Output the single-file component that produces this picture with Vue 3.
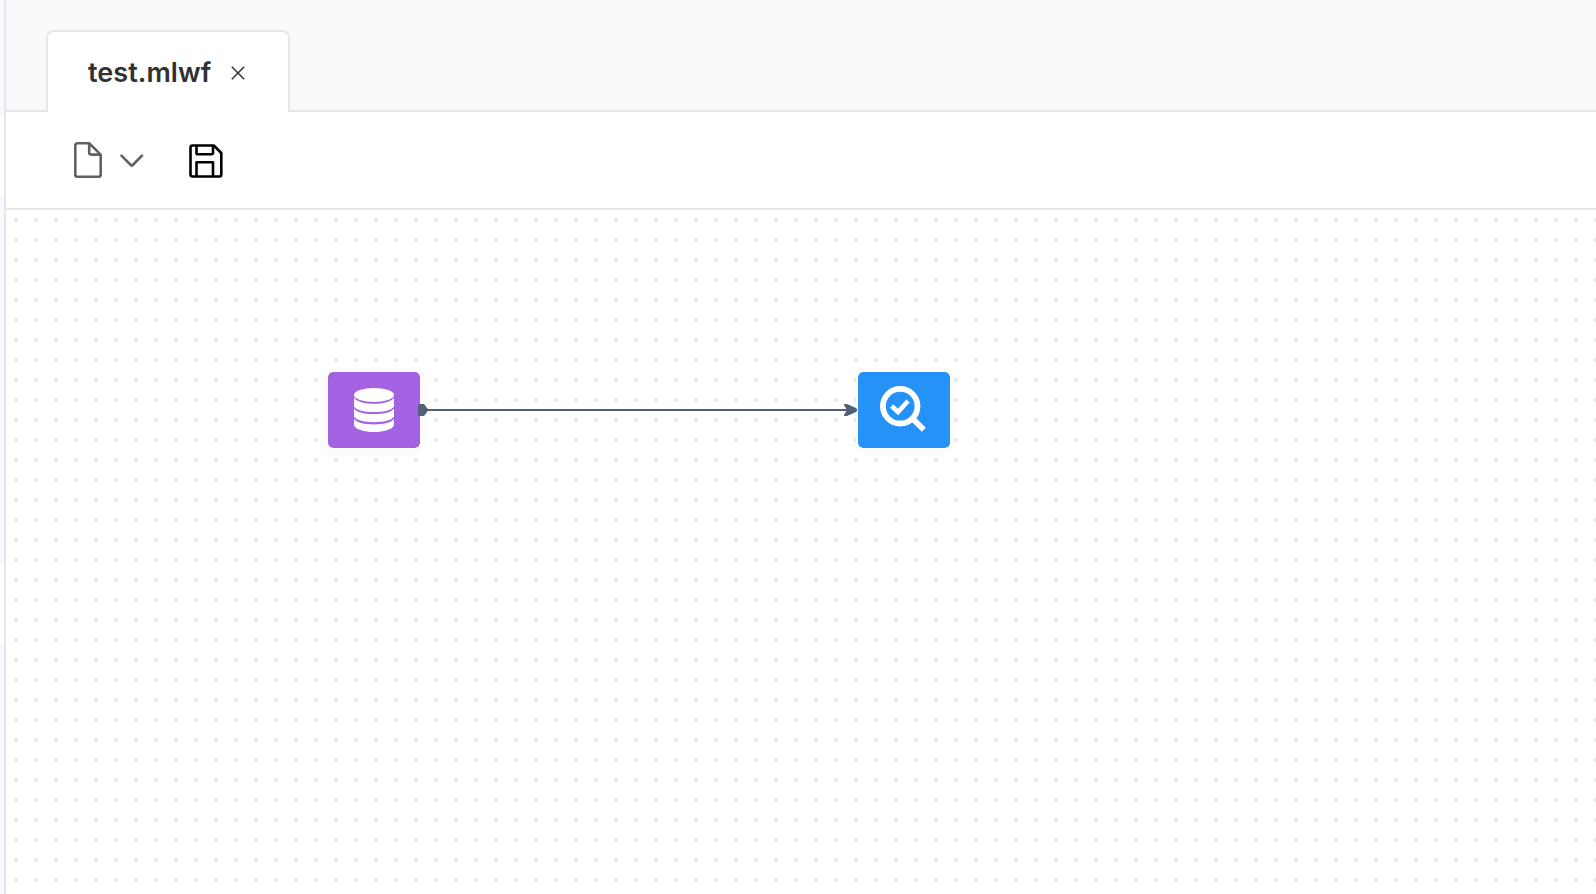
<script setup>
const rail = ['top', 'active', 'middle', 'hover', 'rest']
</script>

<template>
  <div class="app">
    <aside class="rail">
      <span v-for="part in rail" :key="part" :class="['rail-part', part]"></span>
    </aside>
    <main class="editor">
      <header class="tabs">
        <div class="tab">
          <span class="name">test.mlwf</span>
          <svg class="close" width="14" height="14" viewBox="0 0 14 14">
            <path d="M.8 .8L13.2 13.2M13.2 .8L.8 13.2" />
          </svg>
        </div>
      </header>
      <nav class="toolbar">
        <svg class="file" width="28" height="36" viewBox="0 0 28 36">
          <path d="M3 1.3H15.2L26.7 12.6V32.7a2 2 0 0 1-2 2H3.3a2 2 0 0 1-2-2V3.3a2 2 0 0 1 2-2Z" />
          <path d="M15.2 1.5V10.6a2 2 0 0 0 2 2H26.7" />
        </svg>
        <svg class="chevron" width="24" height="14" viewBox="0 0 24 14">
          <path d="M1.5 1.7L10.8 11Q11.8 12 12.8 11L22 1.7" />
        </svg>
        <svg class="save" width="34" height="34" viewBox="0 0 34 34">
          <path d="M3.2 1.5H24.8L32.3 9V30.5a2 2 0 0 1-2 2H3.5a2 2 0 0 1-2-2V3.2a1.7 1.7 0 0 1 1.7-1.7Z" />
          <path d="M7.5 1.5V8.9a1.3 1.3 0 0 0 1.3 1.3H22.7a1.3 1.3 0 0 0 1.3-1.3V1.5M7.5 32.5V18.2H24V32.5" />
        </svg>
      </nav>
      <section class="canvas">
        <div class="node data">
          <svg width="40" height="44" viewBox="0 0 40 44">
            <ellipse cx="20" cy="7" rx="20" ry="7" />
            <path d="M0 9.4C4 17.8 36 17.8 40 9.4V18.4C36 26 4 26 0 18.4ZM0 20.4C4 28 36 28 40 20.4V28.6C36 36.2 4 36.2 0 28.6ZM0 30.8C4 38.4 36 38.4 40 30.8V37.2C37 46.2 3 46.2 0 37.2Z" />
          </svg>
        </div>
        <div class="node check">
          <svg width="46" height="46" viewBox="0 0 46 46">
            <circle cx="20.2" cy="20.2" r="17.3" />
            <path class="handle" d="M32.5 32.5L43.8 43.8" />
            <path class="tick" d="M11.6 20L18 26L28 15" />
          </svg>
        </div>
        <svg class="edge" width="440" height="12" viewBox="0 0 440 12">
          <path class="line" d="M6 6H430" />
          <path d="M2 0H6L10.5 6L6 12H2Q0 12 0 10V2Q0 0 2 0ZM427 0Q425.4 0 426.2 1.4L429 6L426.2 10.6Q425.4 12 427 12H429L438 8Q440.5 6 438 4L429 0Z" />
        </svg>
      </section>
    </main>
  </div>
</template>

<style>
body { margin: 0; }
</style>

<style scoped>
.app { width: 1596px; height: 894px; display: flex; overflow: hidden; background: #fff; font-family: Inter, sans-serif; }
.rail { width: 4px; flex: none; display: flex; flex-direction: column; border-right: 2px solid #e4e6ee; }
.rail-part { background: #f7f9fc; }
.top { height: 116px; }
.active, .hover { height: 80px; background: #fff; }
.middle { height: 368px; }
.rest { flex: 1; }
.editor { flex: 1; min-width: 0; display: flex; flex-direction: column; }
.tabs { box-sizing: border-box; height: 112px; padding: 30px 0 0 40px; background: #f8f9fb; border-bottom: 2px solid #e4e6ec; }
.tab { box-sizing: border-box; width: 244px; height: 82px; display: flex; align-items: center; padding: 2px 0 0 40px; border: 2px solid #e4e6ec; border-bottom: 0; border-radius: 8px 8px 0 0; background: #fff; }
.name { width: 123px; white-space: nowrap; font-size: 27px; font-weight: 600; letter-spacing: .05px; line-height: 36px; color: #303133; }
.close { margin-left: 20px; fill: none; stroke: #303133; stroke-width: 1.5; }
.toolbar { box-sizing: border-box; height: 98px; display: flex; align-items: flex-start; padding: 30px 0 0 68px; border-bottom: 2px solid #e4e6ec; }
.toolbar svg { fill: none; stroke-linejoin: round; }
.file { stroke: #606266; stroke-width: 2.6; }
.chevron { margin: 12px 0 0 18px; stroke: #606266; stroke-width: 2.6; stroke-linecap: round; }
.save { margin: 2px 0 0 45px; stroke: #000; stroke-width: 2.6; }
.canvas { position: relative; flex: 1; background: conic-gradient(from 90deg at 16px 16px, #e8ecf4 0 90deg, transparent 0) -8px -8px / 20px 20px; }
.node { position: absolute; top: 160px; width: 92px; height: 76px; display: flex; align-items: center; justify-content: center; border: 2px solid #fff; border-radius: 7px; background-clip: padding-box; box-shadow: 0 2px 10px rgba(0, 0, 0, .045); }
.node svg { fill: #fff; }
.data { left: 320px; background-color: #a262e2; }
.check { left: 850px; background-color: #2592f8; }
.check svg { fill: none; stroke: #fff; stroke-width: 5.8; margin: -2px 0 0 -2px; }
.check .tick { stroke-width: 4.5; }
.edge { position: absolute; left: 412px; top: 194px; fill: #526075; }
.line { stroke: #526075; stroke-width: 2; }
</style>
